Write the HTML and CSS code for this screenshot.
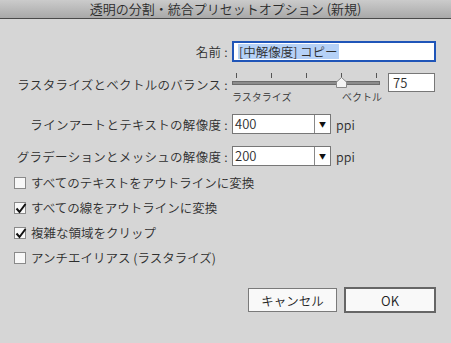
FILE: index.html
```html
<!DOCTYPE html>
<html lang="ja">
<head>
    <meta charset="UTF-8">
    <meta name="viewport" content="width=device-width, initial-scale=1.0">
    <title>透明の分割・統合プリセットオプション (新規)</title>
    <link rel="stylesheet" href="styles.css">
</head>
<body>
    <div class="titlebar">透明の分割・統合プリセットオプション (新規)</div>

    <div class="dialog">
        <div class="row row-name">
            <span class="label">名前 :</span>
            <div class="name-field"><span class="selected">[中解像度] コピー</span></div>
        </div>

        <div class="row row-slider">
            <span class="label">ラスタライズとベクトルのバランス :</span>
            <div class="slider">
                <span class="tick" style="left: 4px;"></span>
                <span class="tick" style="left: 39px;"></span>
                <span class="tick" style="left: 74px;"></span>
                <span class="tick" style="left: 109px;"></span>
                <span class="tick" style="left: 144px;"></span>
                <div class="track"></div>
                <svg class="thumb" width="11" height="11" viewBox="0 0 11 11">
                    <path d="M5.5 0.5 L10.5 5 L10.5 10.5 L0.5 10.5 L0.5 5 Z" fill="#f4f4f4" stroke="#8a8a8a"/>
                </svg>
                <span class="end-label left">ラスタライズ</span>
                <span class="end-label right">ベクトル</span>
            </div>
            <div class="num-field">75</div>
        </div>

        <div class="row row-select first">
            <span class="label">ラインアートとテキストの解像度 :</span>
            <div class="select"><span class="value">400</span><span class="arrow">▼</span></div>
            <span class="unit">ppi</span>
        </div>

        <div class="row row-select second">
            <span class="label">グラデーションとメッシュの解像度 :</span>
            <div class="select"><span class="value">200</span><span class="arrow">▼</span></div>
            <span class="unit">ppi</span>
        </div>

        <div class="checks">
            <label class="check"><span class="box"></span>すべてのテキストをアウトラインに変換</label>
            <label class="check"><span class="box"><svg width="12" height="11" viewBox="0 0 12 11"><path d="M1.5 5.5 L4.5 9 L10.5 1" fill="none" stroke="#111" stroke-width="2"/></svg></span>すべての線をアウトラインに変換</label>
            <label class="check"><span class="box"><svg width="12" height="11" viewBox="0 0 12 11"><path d="M1.5 5.5 L4.5 9 L10.5 1" fill="none" stroke="#111" stroke-width="2"/></svg></span>複雑な領域をクリップ</label>
            <label class="check"><span class="box"></span>アンチエイリアス (ラスタライズ)</label>
        </div>

        <div class="buttons">
            <button class="btn">キャンセル</button>
            <button class="btn default">OK</button>
        </div>
    </div>
</body>
</html>
```

FILE: styles.css
```css
body {
    margin: 0;
    padding: 0;
    background: #d6d6d6;
    font-family: "Noto Sans CJK JP", "Noto Sans", sans-serif;
    font-size: 12.5px;
    font-weight: 350;
    color: #2e2e2e;
    height: 343px;
    overflow: hidden;
}
.titlebar {
    height: 18px;
    line-height: 18px;
    text-align: center;
    font-size: 13px;
    color: #2b2b2b;
    background: linear-gradient(#cbcbcb, #a9a9a9);
    border-bottom: 1px solid #4a4a4a;
}
.dialog {
    padding-top: 22px;
}
.row {
    display: flex;
    align-items: center;
}
.label {
    width: 231px;
    padding-right: 3px;
    box-sizing: border-box;
    text-align: right;
    white-space: nowrap;
    flex-shrink: 0;
    letter-spacing: 0.3px;
}
.name-field {
    width: 204px;
    height: 21px;
    box-sizing: border-box;
    border: 2px solid #1f55b8;
    background: white;
    padding: 0 0 0 4px;
    margin-left: 1px;
    display: flex;
    align-items: center;
}
.selected {
    background: #b5d1f7;
    line-height: 15px;
    padding: 0 1px;
}
.row-slider {
    margin-top: 11px;
    align-items: flex-start;
}
.row-slider .label {
    margin-top: 2px;
}
.slider {
    position: relative;
    width: 150px;
    height: 31px;
    margin-left: 1px;
}
.tick {
    position: absolute;
    top: 0;
    width: 1px;
    height: 5px;
    background: #555;
}
.track {
    position: absolute;
    top: 8px;
    left: 0;
    width: 148px;
    height: 4px;
    background: #8c8c8c;
    border: 1px solid #6c6c6c;
    box-sizing: border-box;
}
.thumb {
    position: absolute;
    top: 4px;
    left: 104px;
}
.end-label {
    position: absolute;
    top: 18px;
    font-size: 10px;
    line-height: 12px;
    color: #333;
}
.end-label.left {
    left: 0;
}
.end-label.right {
    left: 110px;
}
.num-field {
    width: 47px;
    height: 19px;
    box-sizing: border-box;
    border: 1px solid #777;
    background: white;
    margin-left: 6px;
    padding-left: 4px;
    font-size: 13px;
    line-height: 17px;
}
.row-select.first {
    margin-top: 10px;
}
.row-select.second {
    margin-top: 12px;
}
.select {
    width: 99px;
    height: 20px;
    box-sizing: border-box;
    border: 1px solid #777;
    background: white;
    margin-left: 1px;
    display: flex;
}
.select .value {
    flex: 1;
    padding-left: 2px;
    font-size: 13px;
    line-height: 18px;
}
.select .arrow {
    width: 15px;
    border-left: 1px solid #888;
    font-size: 7px;
    line-height: 18px;
    text-align: center;
    color: #111;
}
.unit {
    margin-left: 5px;
}
.checks {
    margin-top: 4px;
    padding-left: 14px;
}
.check {
    display: flex;
    align-items: center;
    height: 25px;
}
.box {
    width: 12px;
    height: 12px;
    box-sizing: border-box;
    border: 1px solid #8a8a8a;
    background: #f8f8f8;
    margin-right: 5px;
    position: relative;
}
.box svg {
    position: absolute;
    left: 0;
    top: 0;
}
.buttons {
    display: flex;
    justify-content: flex-end;
    align-items: center;
    gap: 7px;
    padding-right: 15px;
    margin-top: 17px;
}
.btn {
    font-family: "Noto Sans CJK JP", "Noto Sans", sans-serif;
    font-size: 12.5px;
    font-weight: 350;
    color: #222;
    background: #f9f9f9;
    border: 1px solid #7a7a7a;
    width: 89px;
    height: 24px;
    padding: 0;
}
.btn.default {
    width: 92px;
    height: 26px;
    border: 2px solid #666;
    font-size: 13px;
}
```
